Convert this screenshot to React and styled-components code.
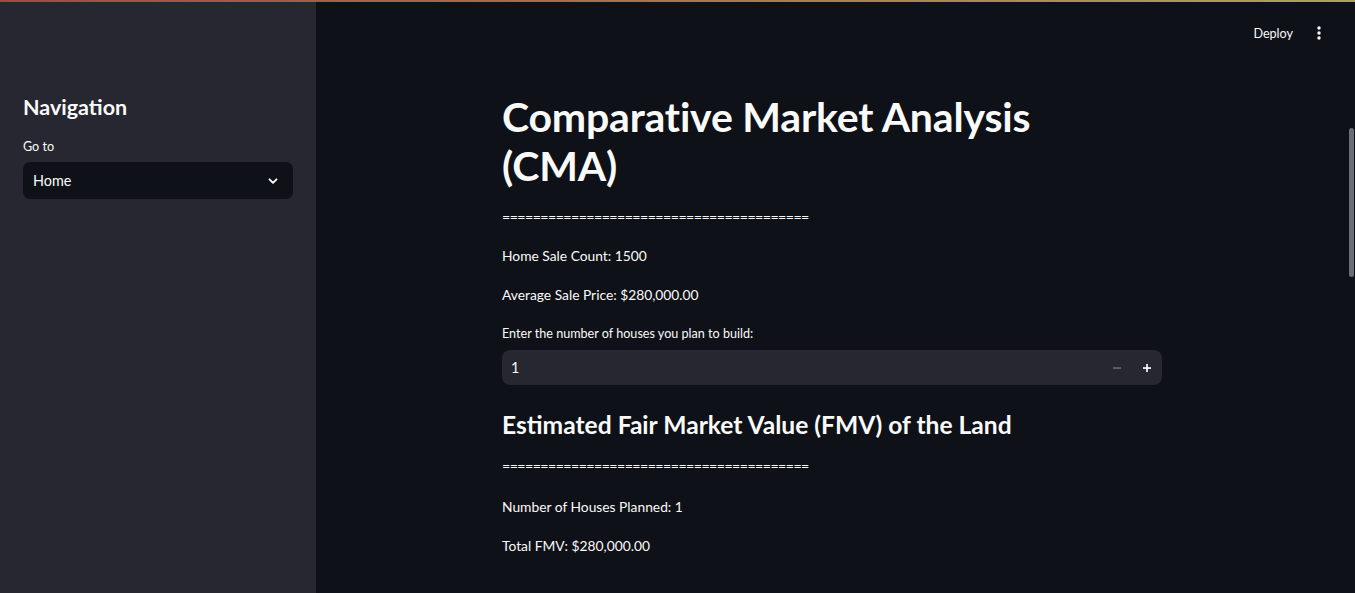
import React from "react";
import styled, { createGlobalStyle } from "styled-components";

const GlobalStyle = createGlobalStyle`
  html, body { margin: 0; padding: 0; background: #0e1117; overflow: hidden; }
  body { font-family: Lato, "Noto Sans", sans-serif; color: #fafafa; }
  * { box-sizing: border-box; }
`;

const Shell = styled.div`
  position: relative;
  display: flex;
  width: 100vw;
  height: 100vh;
  background: #0e1117;
`;

const Decoration = styled.div`
  position: absolute;
  top: 0;
  left: 0;
  right: 0;
  height: 2px;
  background: linear-gradient(90deg, #a84646, #a8a654);
  z-index: 10;
`;

const Sidebar = styled.aside`
  width: 316px;
  flex: none;
  background: #262730;
  padding: 92px 23px 0 23px;
  display: flex;
  flex-direction: column;
`;

const SideHeading = styled.h2`
  margin: 0;
  font-size: 21.5px;
  line-height: 30px;
  font-weight: 700;
  color: #fafafa;
`;

const Label = styled.label`
  display: block;
  font-size: 12.6px;
  line-height: 20px;
  color: #fafafa;
  margin: ${(p) => p.$mt || 0}px 0 ${(p) => (p.$mb === undefined ? 6 : p.$mb)}px 0;
`;

const SelectBox = styled.div`
  height: 37px;
  border-radius: 7px;
  background: #0e1117;
  display: flex;
  align-items: center;
  justify-content: space-between;
  padding: 0 14px 0 10px;
  font-size: 14.4px;
  color: #fafafa;
`;

const Main = styled.main`
  position: relative;
  flex: 1;
  display: flex;
  flex-direction: column;
  padding-right: 7px;
`;

const Header = styled.header`
  height: 60px;
  flex: none;
  display: flex;
  align-items: center;
  justify-content: flex-end;
  padding: 6px 21px 0 0;
  gap: 18px;
`;

const DeployButton = styled.button`
  background: transparent;
  border: none;
  color: #fafafa;
  font-family: Lato, "Noto Sans", sans-serif;
  font-size: 12.6px;
  padding: 0;
  cursor: pointer;
`;

const Kebab = styled.div`
  width: 16px;
  height: 16px;
  display: flex;
  align-items: center;
  justify-content: center;
`;

const Content = styled.div`
  width: 660px;
  margin: 0 auto;
  padding-top: 32px;
  display: flex;
  flex-direction: column;
`;

const Title = styled.h1`
  margin: 0;
  max-width: 620px;
  font-size: 41px;
  line-height: 49px;
  font-weight: 700;
  color: #fafafa;
  letter-spacing: -0.2px;
`;

const SubTitle = styled.h2`
  margin: ${(p) => p.$mt}px 0 0 0;
  font-size: 24.6px;
  line-height: 32px;
  font-weight: 700;
  color: #fafafa;
`;

const Para = styled.p`
  margin: ${(p) => p.$mt}px 0 0 0;
  font-size: 13.8px;
  line-height: 23px;
  color: #fafafa;
`;

const Rule = styled(Para)`
  font-size: 14.2px;
  letter-spacing: -0.56px;
  white-space: nowrap;
`;

const NumberField = styled.div`
  height: 35px;
  border-radius: 8px;
  background: #262730;
  display: flex;
  align-items: center;
  padding: 0 0 0 9px;
`;

const NumberValue = styled.span`
  flex: 1;
  font-size: 14.4px;
  color: #fafafa;
`;

const StepButton = styled.button`
  width: 30px;
  height: 35px;
  border: none;
  background: transparent;
  display: flex;
  align-items: center;
  justify-content: center;
  padding: 0;
  color: ${(p) => (p.$disabled ? "#6b6d76" : "#fafafa")};
`;

const ScrollThumb = styled.div`
  position: absolute;
  right: 1px;
  top: 128px;
  width: 5px;
  height: 149px;
  border-radius: 3px;
  background: #6b6d74;
`;

const Chevron = () => (
  <svg width="12" height="12" viewBox="0 0 12 12" fill="none">
    <path d="M2.5 4.3 L6 7.8 L9.5 4.3" stroke="#fafafa" strokeWidth="1.9" strokeLinecap="round" strokeLinejoin="round" />
  </svg>
);

const Minus = () => (
  <svg width="10" height="10" viewBox="0 0 10 10">
    <rect x="1" y="4.3" width="8" height="1.5" fill="currentColor" />
  </svg>
);

const Plus = () => (
  <svg width="10" height="10" viewBox="0 0 10 10">
    <rect x="1" y="4.2" width="8" height="1.7" fill="currentColor" />
    <rect x="4.15" y="1" width="1.7" height="8" fill="currentColor" />
  </svg>
);

const Dots = () => (
  <svg width="4" height="14" viewBox="0 0 4 14">
    <circle cx="2" cy="2" r="1.7" fill="#fafafa" />
    <circle cx="2" cy="7" r="1.7" fill="#fafafa" />
    <circle cx="2" cy="12" r="1.7" fill="#fafafa" />
  </svg>
);

const EQ = "=".repeat(40);

export default function App() {
  return (
    <>
      <GlobalStyle />
      <Shell>
        <Decoration />
        <Sidebar>
          <SideHeading>Navigation</SideHeading>
          <Label $mt={15} $mb={5}>Go to</Label>
          <SelectBox>
            <span>Home</span>
            <Chevron />
          </SelectBox>
        </Sidebar>
        <Main>
          <Header>
            <DeployButton>Deploy</DeployButton>
            <Kebab>
              <Dots />
            </Kebab>
          </Header>
          <Content>
            <Title>Comparative Market Analysis (CMA)</Title>
            <Rule $mt={15}>{EQ}</Rule>
            <Para $mt={16}>Home Sale Count: 1500</Para>
            <Para $mt={16}>Average Sale Price: $280,000.00</Para>
            <Label $mt={18} $mb={6}>Enter the number of houses you plan to build:</Label>
            <NumberField>
              <NumberValue>1</NumberValue>
              <StepButton $disabled>
                <Minus />
              </StepButton>
              <StepButton>
                <Plus />
              </StepButton>
            </NumberField>
            <SubTitle $mt={24}>Estimated Fair Market Value (FMV) of the Land</SubTitle>
            <Rule $mt={13}>{EQ}</Rule>
            <Para $mt={18}>Number of Houses Planned: 1</Para>
            <Para $mt={16}>Total FMV: $280,000.00</Para>
          </Content>
          <ScrollThumb />
        </Main>
      </Shell>
    </>
  );
}
